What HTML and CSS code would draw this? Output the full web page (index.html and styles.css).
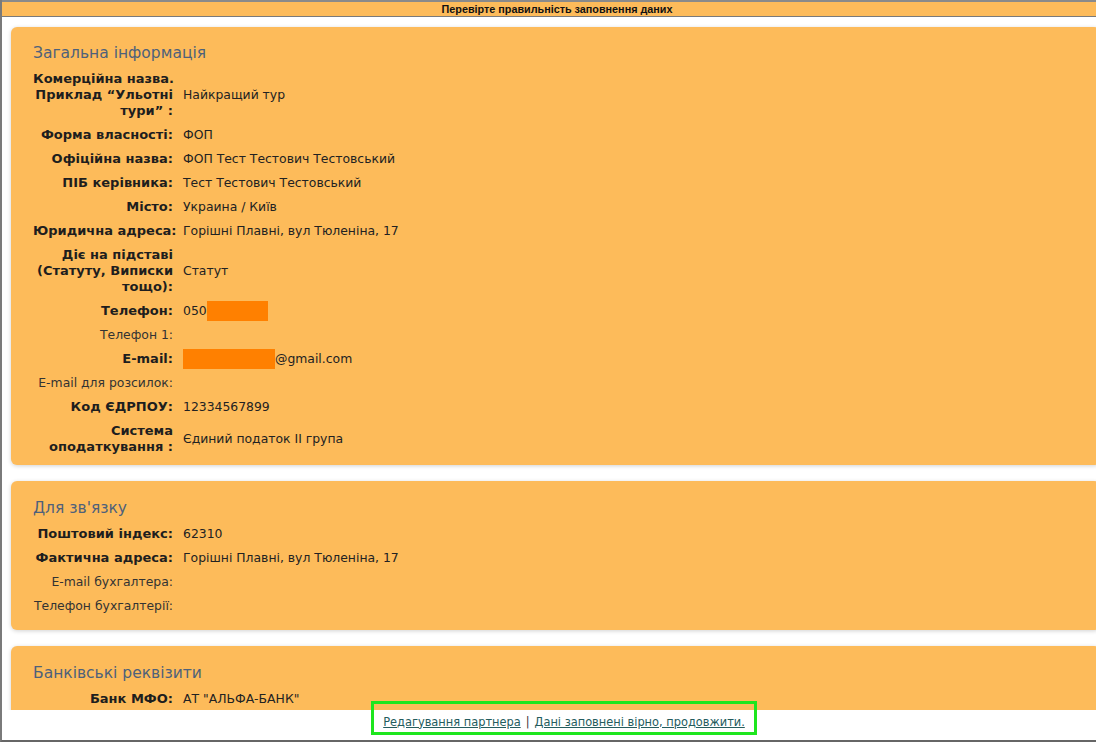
FILE: index.html
```html
<!DOCTYPE html>
<html lang="uk">
<head>
<meta charset="utf-8">
<title>Перевірте правильність заповнення даних</title>
<link rel="stylesheet" href="styles.css">
</head>
<body>
<div class="window">
  <div class="titlebar">Перевірте правильність заповнення даних</div>
  <div class="content">
    <section class="card card-main">
      <h2 class="card-title">Загальна інформація</h2>
      <div class="rows">
        <div class="label">Комерційна назва.<br>Приклад “Ульотні<br>тури” :</div>
        <div class="value">Найкращий тур</div>
        <div class="label">Форма власності:</div>
        <div class="value">ФОП</div>
        <div class="label">Офіційна назва:</div>
        <div class="value">ФОП Тест Тестович Тестовський</div>
        <div class="label">ПІБ керівника:</div>
        <div class="value">Тест Тестович Тестовський</div>
        <div class="label">Місто:</div>
        <div class="value">Украина / Київ</div>
        <div class="label">Юридична адреса:</div>
        <div class="value">Горішні Плавні, вул Тюленіна, 17</div>
        <div class="label">Діє на підставі<br>(Статуту, Виписки<br>тощо):</div>
        <div class="value">Статут</div>
        <div class="label">Телефон:</div>
        <div class="value">050<span class="redact redact-phone"></span></div>
        <div class="label plain">Телефон 1:</div>
        <div class="value"></div>
        <div class="label">E-mail:</div>
        <div class="value"><span class="redact redact-mail"></span>@gmail.com</div>
        <div class="label plain">E-mail для розсилок:</div>
        <div class="value"></div>
        <div class="label">Код ЄДРПОУ:</div>
        <div class="value">12334567899</div>
        <div class="label">Система<br>оподаткування :</div>
        <div class="value">Єдиний податок II група</div>
      </div>
    </section>
    <section class="card">
      <h2 class="card-title">Для зв'язку</h2>
      <div class="rows">
        <div class="label">Поштовий індекс:</div>
        <div class="value">62310</div>
        <div class="label">Фактична адреса:</div>
        <div class="value">Горішні Плавні, вул Тюленіна, 17</div>
        <div class="label plain">E-mail бухгалтера:</div>
        <div class="value"></div>
        <div class="label plain">Телефон бухгалтерії:</div>
        <div class="value"></div>
      </div>
    </section>
    <section class="card">
      <h2 class="card-title">Банківські реквізити</h2>
      <div class="rows">
        <div class="label">Банк МФО:</div>
        <div class="value">АТ "АЛЬФА-БАНК"</div>
      </div>
    </section>
  </div>
  <div class="footer">
    <a href="#" class="link">Редагування партнера</a>
    <span class="sep">|</span>
    <a href="#" class="link">Дані заповнені вірно, продовжити.</a>
  </div>
  <div class="highlight"></div>
</div>
</body>
</html>
```
FILE: styles.css
```css
html, body {
  margin: 0;
  padding: 0;
  background: #ffffff;
  overflow: hidden;
}

body {
  width: 1096px;
  height: 742px;
  font-family: "DejaVu Sans", Verdana, sans-serif;
  font-size: 12.4px;
  color: #222;
}

.window {
  position: relative;
  width: 1104px;
  height: 740px;
  border-left: 2px solid #7a7a7a;
  border-bottom: 2px solid #666;
  display: flex;
  flex-direction: column;
  background: #fff;
}

.titlebar {
  height: 14px;
  line-height: 14px;
  background: #fdbb5a;
  border-top: 2px solid #8a8a8a;
  border-bottom: 1px solid #7a7a7a;
  font-family: "Liberation Sans", Arial, sans-serif;
  font-weight: bold;
  font-size: 10.8px;
  color: #111;
  text-align: center;
  padding-left: 6px;
  flex: none;
}

.content {
  flex: 1;
  overflow: hidden;
  padding: 10px 6px 0 9px;
  display: flex;
  flex-direction: column;
  gap: 16px;
}

.card {
  background: #fdbb5a;
  border-radius: 6px;
  box-shadow: 0 1px 4px rgba(0, 0, 0, 0.18);
  padding: 16px 22px 12px 22px;
  flex: none;
}

.card-main {
  padding-top: 15px;
  padding-bottom: 6px;
}

.card-title {
  margin: 0 0 2px 0;
  font-size: 15.5px;
  line-height: 23px;
  font-weight: normal;
  color: #4e617a;
}

.rows {
  display: grid;
  grid-template-columns: 140px 1fr;
  column-gap: 10px;
}

.label,
.value {
  padding: 4px 0;
  line-height: 16px;
  min-height: 16px;
}

.label {
  text-align: right;
  font-weight: bold;
  font-size: 13px;
  white-space: nowrap;
  color: #1e1e1e;
}

.label.plain {
  font-weight: normal;
  font-size: 12.4px;
  color: #333;
}

.value {
  display: flex;
  align-items: center;
  color: #222;
}

.redact {
  display: inline-block;
  background: #ff8000;
  height: 20px;
  margin: -2px 0;
}

.redact-phone {
  width: 61px;
}

.redact-mail {
  width: 92px;
}

.footer {
  height: 30px;
  flex: none;
  background: #fff;
  display: flex;
  align-items: center;
  justify-content: center;
  padding-left: 20px;
  padding-bottom: 7px;
  box-sizing: border-box;
  gap: 5px;
  font-size: 11.4px;
}

.link {
  color: #245c5e;
  text-decoration: underline;
}

.sep {
  color: #333;
}

.highlight {
  position: absolute;
  left: 369px;
  top: 701px;
  width: 380px;
  height: 28px;
  border: 3px solid #1ee61e;
  pointer-events: none;
}
```
